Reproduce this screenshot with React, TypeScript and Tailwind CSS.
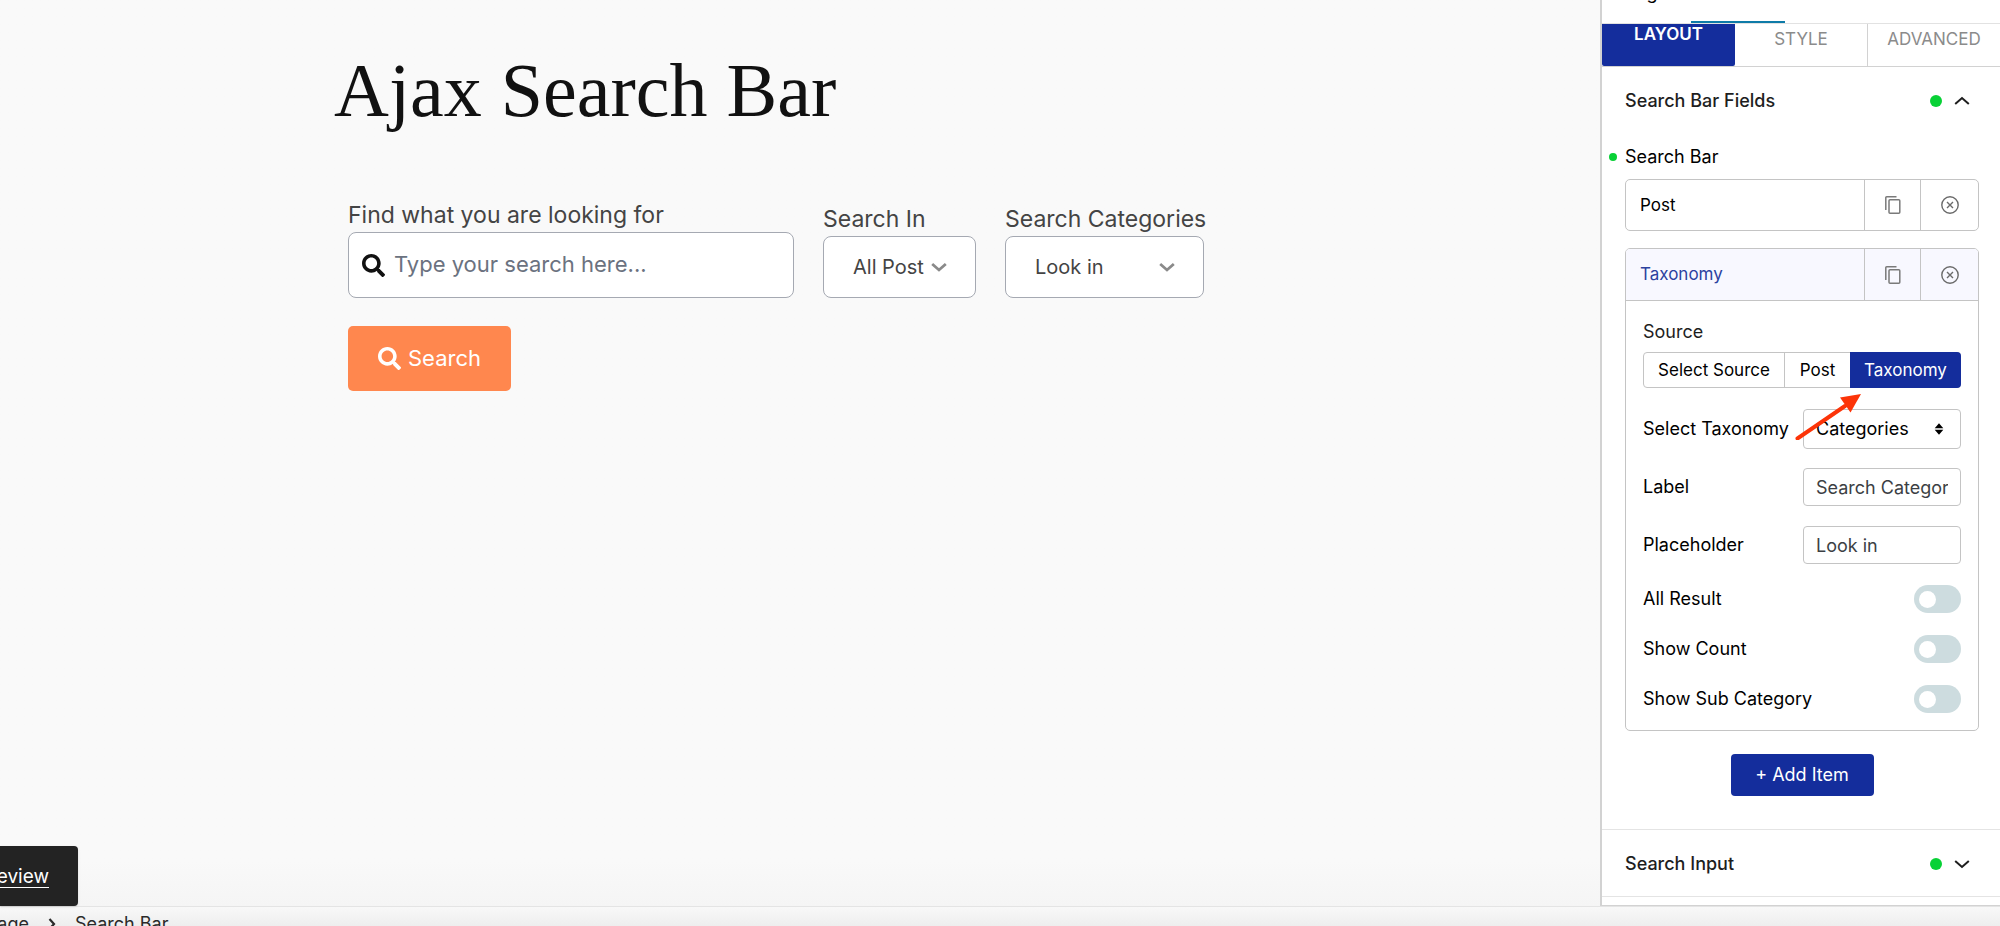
import React, { useState } from "react";

const BLUE_BTN = "bg-[#142d9c] text-white";

function SearchIcon({ className }: { className: string }) {
  return (
    <svg viewBox="0 0 512 512" className={className} fill="currentColor" aria-hidden="true">
      <path d="M505 442.7L405.3 343c-4.500-4.500-10.600-7-17-7H372c27.600-35.300 44-79.700 44-128C416 93.100 322.900 0 208 0S0 93.100 0 208s93.100 208 208 208c48.300 0 92.700-16.400 128-44v16.300c0 6.400 2.500 12.500 7 17l99.700 99.700c9.400 9.400 24.600 9.400 33.900 0l28.300-28.300c9.400-9.400 9.400-24.600.1-34zM208 336c-70.700 0-128-57.200-128-128 0-70.700 57.200-128 128-128 70.700 0 128 57.200 128 128 0 70.700-57.200 128-128 128z" />
    </svg>
  );
}

function Chevron({ className, up = false, stroke = 2 }: { className: string; up?: boolean; stroke?: number }) {
  return (
    <svg viewBox="0 0 16 10" className={className} fill="none" stroke="currentColor" strokeWidth={stroke} aria-hidden="true">
      <path d={up ? "M1.200 8 8 2 14.800 8" : "M1.200 2 8 8 14.800 2"} />
    </svg>
  );
}

function CopyIcon() {
  return (
    <svg viewBox="0 0 16 18" className="h-[18px] w-4" fill="none" stroke="#7a7a7a" strokeWidth="1.500" aria-hidden="true">
      <path d="M.8 14V1.700Q.8.8 1.700.8H11.500" />
      <rect x="4" y="3.800" width="10.800" height="13.400" rx="1" />
    </svg>
  );
}

function CloseIcon() {
  return (
    <svg viewBox="0 0 18 18" className="size-[18px]" fill="none" stroke="#6b6b6b" strokeWidth="1.400" aria-hidden="true">
      <circle cx="9" cy="9" r="8.200" />
      <path d="M6 6l6 6M12 6l-6 6" />
    </svg>
  );
}

function RepeaterHead({ title, active = false }: { title: string; active?: boolean }) {
  return (
    <div className={active ? "flex h-[52px] rounded-t-[4px] border-b border-[#c4c4c4] bg-[#f8f8ff]" : "flex h-[50px]"}>
      <button type="button" className={active ? "flex-1 px-[14px] text-left text-[17px] text-[#2c429f]" : "flex-1 px-[14px] text-left text-[17px]"}>
        {title}
      </button>
      <button type="button" aria-label="Duplicate" className="flex w-14 items-center justify-center border-l border-[#c4c4c4]">
        <CopyIcon />
      </button>
      <button type="button" aria-label="Remove" className="flex w-[58px] items-center justify-center border-l border-[#c4c4c4]">
        <CloseIcon />
      </button>
    </div>
  );
}

function PanelHead({ title, open = false }: { title: string; open?: boolean }) {
  return (
    <button type="button" aria-expanded={open} className="flex h-[66px] w-full items-center pt-[2px] pr-[30px] pl-[23px] font-medium text-[#1e1e1e]">
      <span className="flex-1 text-left">{title}</span>
      <span className="mr-3 size-3 rounded-full bg-[#08d136]" />
      <Chevron up={open} className="h-[10px] w-4" />
    </button>
  );
}

function Toggle({ label }: { label: string }) {
  const [on, setOn] = useState(false);
  return (
    <label className="flex h-[50px] items-center justify-between">
      {label}
      <input
        type="checkbox"
        role="switch"
        checked={on}
        onChange={(e) => setOn(e.target.checked)}
        className="flex h-7 w-[47px] appearance-none items-center rounded-full bg-[#cddcdf] px-[5px] before:size-[17px] before:rounded-full before:bg-white checked:justify-end checked:bg-[#142d9c]"
      />
    </label>
  );
}

function TextRow({ id, label, value }: { id: string; label: string; value: string }) {
  return (
    <div className="flex h-[58px] items-center justify-between">
      <label htmlFor={id}>{label}</label>
      <input id={id} defaultValue={value} className="h-[38px] w-[158px] rounded-[4px] border border-[#c4c4c4] bg-white px-3 text-[#3c3f44]" />
    </div>
  );
}

function Canvas() {
  return (
    <main className="relative min-w-0 flex-1 bg-gradient-to-b from-[#f9f9f9] from-95% to-[#f5f5f5] pl-[334px]">
      <h1 className="pt-[42px] font-['Liberation_Serif',serif] text-[76px] leading-[96px] text-[#111111]">Ajax Search Bar</h1>
      <form className="mt-[62px] pl-[14px] text-[22px] text-[#444444]" onSubmit={(e) => e.preventDefault()}>
        <div className="flex items-end gap-[29px]">
          <div className="w-[446px]">
            <label htmlFor="query" className="block pb-[2px] text-[23px] leading-[30px]">Find what you are looking for</label>
            <div className="flex h-[66px] items-center gap-[9px] rounded-lg border border-[#a5a9b2] bg-white pl-[13px]">
              <SearchIcon className="size-[23px] text-[#111111]" />
              <input id="query" placeholder="Type your search here..." className="min-w-0 flex-1 pb-[2px] outline-none placeholder:text-[#6b7280]" />
            </div>
          </div>
          <div>
            <label htmlFor="in" className="block text-[23px] leading-[34px]">Search In</label>
            <div className="relative flex w-fit items-center">
              <select id="in" className="h-[62px] w-[153px] appearance-none rounded-lg border border-[#a5a9b2] bg-white pl-[29px] text-xl">
                <option>All Post</option>
              </select>
              <Chevron stroke={2.8} className="pointer-events-none absolute right-[29px] h-[10px] w-4 text-[#8a8a8a]" />
            </div>
          </div>
          <div>
            <label htmlFor="cats" className="block text-[23px] leading-[34px]">Search Categories</label>
            <div className="relative flex w-fit items-center">
              <select id="cats" className="h-[62px] w-[199px] appearance-none rounded-lg border border-[#a5a9b2] bg-white pl-[29px] text-xl">
                <option>Look in</option>
              </select>
              <Chevron stroke={2.8} className="pointer-events-none absolute right-[29px] h-[10px] w-4 text-[#8a8a8a]" />
            </div>
          </div>
        </div>
        <button type="submit" className="mt-7 flex h-[65px] w-[163px] items-center justify-center gap-[7px] rounded-[5px] bg-[#ff874e] text-white">
          <SearchIcon className="size-[23px]" />
          Search
        </button>
      </form>
      <div className="absolute bottom-0 left-0 flex h-[60px] w-[78px] items-center justify-end overflow-hidden rounded-r-[4px] bg-[#232323] pt-[2px] pr-[29px] text-[19px] text-white shadow">
        <a href="#preview" className="underline underline-offset-4">Preview</a>
      </div>
    </main>
  );
}

function Sidebar() {
  return (
    <aside className="w-[400px] shrink-0 border-b border-l-2 border-[#d2d2d2] bg-white text-lg">
      <div className="flex h-6 items-end overflow-hidden border-b border-[#e2e2e2]">
        <button type="button" className="h-[60px] w-[89px] shrink-0 leading-none">Page</button>
        <button type="button" aria-label="Block" className="h-[2px] w-[94px] bg-[#0e7ba8]" />
      </div>
      <div className="flex h-[43px] border-b border-[#d2d2d2] text-[17px] leading-none text-[#8b8b8b]">
        <button type="button" className="w-[133px] rounded-b-[2px] bg-[#142d9c] pb-[21px] font-semibold text-white">LAYOUT</button>
        <button type="button" className="flex-1 border-r border-[#d2d2d2] pb-[12px]">STYLE</button>
        <button type="button" className="w-[132px] pb-[12px]">ADVANCED</button>
      </div>
      <PanelHead title="Search Bar Fields" open />
      <div className="px-[23px]">
        <div className="relative flex h-[46px] items-center pt-px">
          <span className="absolute -left-4 size-2 rounded-full bg-[#08d136]" />
          Search Bar
        </div>
        <div className="w-[354px]">
          <div className="overflow-hidden rounded-[5px] border border-[#c4c4c4]">
            <RepeaterHead title="Post" />
          </div>
          <div className="mt-[17px] rounded-[5px] border border-[#c4c4c4]">
            <RepeaterHead title="Taxonomy" active />
            <div className="px-[17px] pt-[14px] pb-[6px]">
              <div className="mb-1 flex h-[33px] items-center text-[#1e1e1e]">Source</div>
              <div className="flex h-9 rounded-[4px] border border-[#c4c4c4] text-[17px]">
                <button type="button" className="flex-1 border-r border-[#c4c4c4]">Select Source</button>
                <button type="button" className="w-[65px]">Post</button>
                <button type="button" className={`-my-px -mr-px w-[111px] rounded-r-[4px] ${BLUE_BTN}`}>Taxonomy</button>
              </div>
              <div className="relative mt-3 flex h-[58px] items-center justify-between">
                <label htmlFor="tax">Select Taxonomy</label>
                <select id="tax" className="h-10 w-[158px] appearance-none rounded-[4px] border border-[#c4c4c4] bg-white px-3">
                  <option>Categories</option>
                </select>
                <svg viewBox="0 0 10 12" className="pointer-events-none absolute right-[17px] h-3 w-[10px]" aria-hidden="true">
                  <path d="M5 .3 9.300 5.300H.7zM.7 6.700H9.300L5 11.700z" />
                </svg>
                <svg viewBox="0 0 68 48" className="pointer-events-none absolute -top-2 left-[152px] h-12 w-[68px]" aria-hidden="true">
                  <path d="M2.500 46.500 50 14" stroke="#fc3408" strokeWidth="4" strokeLinecap="round" />
                  <path d="M66 2 55.500 20.500 45 5.500z" fill="#fc3408" />
                </svg>
              </div>
              <TextRow id="label" label="Label" value="Search Categories" />
              <TextRow id="placeholder" label="Placeholder" value="Look in" />
              <Toggle label="All Result" />
              <Toggle label="Show Count" />
              <Toggle label="Show Sub Category" />
            </div>
          </div>
          <div className="mt-[23px] mb-[33px] flex justify-center">
            <button type="button" className={`h-[42px] w-[143px] rounded-[4px] ${BLUE_BTN}`}>+ Add Item</button>
          </div>
        </div>
      </div>
      <div className="border-y border-[#e4e4e4]">
        <PanelHead title="Search Input" />
      </div>
    </aside>
  );
}

export default function App() {
  return (
    <div className="flex h-screen flex-col overflow-hidden bg-[#f9f9f9] font-[Inter,sans-serif] text-black">
      <div className="flex min-h-0 flex-1">
        <Canvas />
        <Sidebar />
      </div>
      <footer className="h-5 shrink-0 overflow-hidden border-t border-[#e4e4e4] bg-gradient-to-b from-[#f8f8f8] to-[#eeeeee]">
        <nav aria-label="Breadcrumb" className="flex items-center pt-[5px] text-lg leading-6 text-[#2a2a2a]">
          <span className="flex w-[29px] shrink-0 justify-end overflow-hidden">Page</span>
          <svg viewBox="0 0 8 12" className="mx-[19px] h-3 w-2 shrink-0" fill="none" stroke="currentColor" strokeWidth="2.200" aria-hidden="true">
            <path d="M1.500 1 6 6 1.500 11" />
          </svg>
          <span>Search Bar</span>
        </nav>
      </footer>
    </div>
  );
}
